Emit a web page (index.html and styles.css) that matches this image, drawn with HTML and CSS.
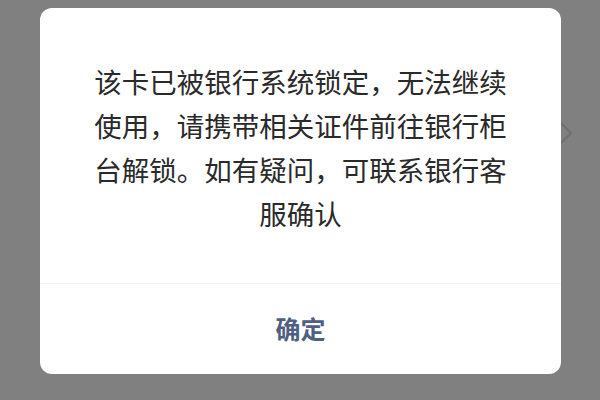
FILE: index.html
```html
<!DOCTYPE html>
<html lang="zh-CN">
<head>
<meta charset="utf-8">
<link rel="stylesheet" href="styles.css">
</head>
<body>
<div class="screen">
  <svg class="ghost-chevron" width="14" height="24" viewBox="0 0 14 24"><path d="M2 2 L12 12 L2 22" fill="none" stroke="#6f6f6f" stroke-width="2.2"/></svg>
  <div class="dialog">
    <div class="message">该卡已被银行系统锁定，无法继续使用，请携带相关证件前往银行柜台解锁。如有疑问，可联系银行客服确认</div>
    <div class="actions"><span class="confirm">确定</span></div>
  </div>
</div>
</body>
</html>
```
FILE: styles.css
```css
html, body {
  margin: 0;
  padding: 0;
}
body {
  width: 600px;
  height: 400px;
  overflow: hidden;
  background: #808080;
  font-family: "Noto Sans CJK SC", "Noto Sans", sans-serif;
}
.screen {
  position: relative;
  width: 600px;
  height: 400px;
  box-sizing: border-box;
  padding: 8px 0 0 40px;
  display: flex;
  align-items: flex-start;
}
.ghost-chevron {
  position: absolute;
  left: 559px;
  top: 121px;
}
.dialog {
  position: relative;
  width: 521px;
  height: 366px;
  background: #ffffff;
  border-radius: 12px;
  display: flex;
  flex-direction: column;
}
.message {
  height: 275px;
  box-sizing: border-box;
  padding: 51px 0 0 0;
  width: 424px;
  align-self: center;
  text-align: center;
  font-size: 27.5px;
  line-height: 44px;
  color: #2a2a2a;
}
.actions {
  flex: 1;
  display: flex;
  align-items: center;
  justify-content: center;
  border-top: 1px solid #f2f2f2;
}
.confirm {
  font-size: 25px;
  font-weight: 700;
  color: #4d6082;
  line-height: 1;
  padding-bottom: 2px;
}
```
